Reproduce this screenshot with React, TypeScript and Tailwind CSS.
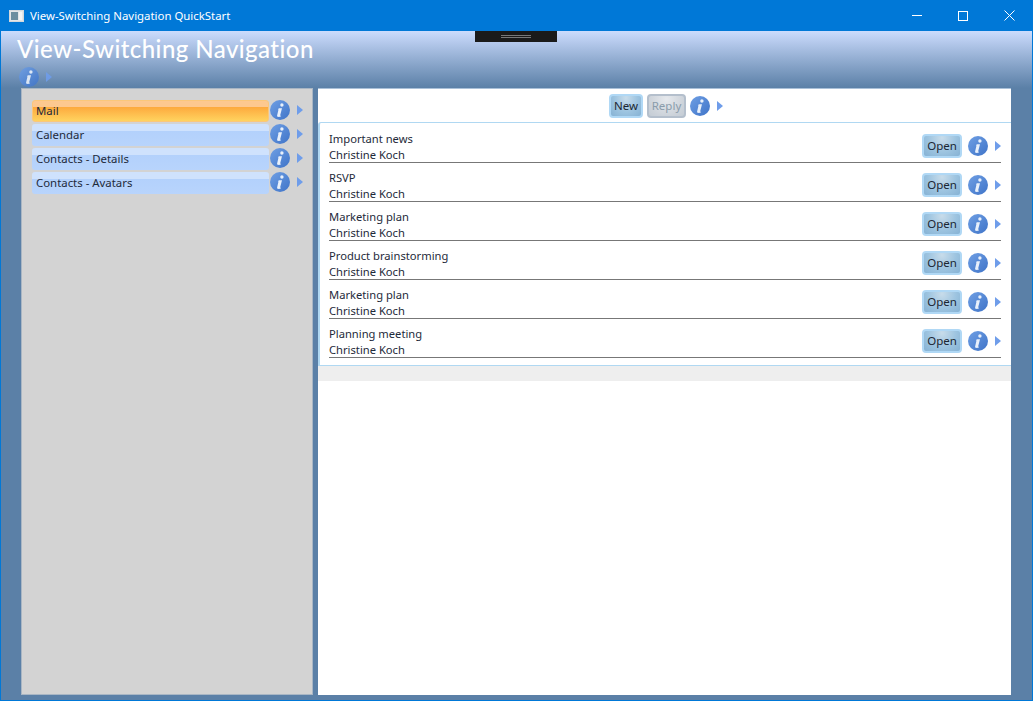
const navItems = ["Calendar", "Contacts - Details", "Contacts - Avatars"];

const messages = [
  "Important news",
  "RSVP",
  "Marketing plan",
  "Product brainstorming",
  "Marketing plan",
  "Planning meeting",
];

function InfoIcon() {
  return (
    <svg width="20" height="20" viewBox="0 0 20 20" className="shrink-0">
      <defs>
        <linearGradient id="infoFill" x1="0" y1="0" x2="1" y2="1">
          <stop offset="0" stopColor="#6f9fe4" />
          <stop offset="1" stopColor="#3f74c8" />
        </linearGradient>
      </defs>
      <circle cx="10" cy="10" r="10" fill="url(#infoFill)" />
      <circle cx="11.9" cy="5" r="1.7" fill="#e8f0fb" />
      <path d="M9 8.2h3l-1.8 7q-.1.6.8.5l-.2.9q-1.4.5-3 .2-.9-.3-.7-1.4L8.5 9.4 7.8 9.2z" fill="#e8f0fb" />
    </svg>
  );
}

function InfoWithArrow() {
  return (
    <div className="flex shrink-0 items-center">
      <InfoIcon />
      <svg width="6" height="10" viewBox="0 0 6 10" className="ml-[7px]">
        <path d="M0 0l6 5-6 5z" fill="#6f9dea" />
      </svg>
    </div>
  );
}

function GlassButton({ label, width, disabled }: { label: string; width: string; disabled?: boolean }) {
  const look = disabled
    ? "border-[#b4bfcc] bg-[radial-gradient(ellipse_at_50%_15%,#e6e9ed_0%,#cdd3da_70%,#c4ccd5_100%)] text-[#8a9cab]"
    : "border-[#b0d8f5] bg-[radial-gradient(ellipse_at_50%_10%,#c8dcea_0%,#9dc4e0_55%,#86b2d4_100%)] text-[#1c2733]";
  return (
    <button className={`flex h-[24px] shrink-0 items-center justify-center rounded-[4px] border-2 text-[11.5px] leading-none ${width} ${look}`}>
      {label}
    </button>
  );
}

export default function App() {
  return (
    <div className="flex h-[701px] w-[1033px] flex-col overflow-hidden border-x border-b border-[#0078d7] bg-[#5b80a7] font-['Noto_Sans',sans-serif] text-[11.4px] text-[#1e2a3a]">
      <div className="flex h-[31px] shrink-0 items-center bg-[#0078d7] text-white">
        <div className="ml-[8px] flex h-[12px] w-[15px] items-stretch gap-[1px] border border-[#d4d8dc] bg-[#e4e6e8] p-[1px]">
          <div className="w-[7px] bg-[#6c8ea0]" />
          <div className="flex-1 bg-[#f4f4f4]" />
        </div>
        <span className="ml-[6px] text-[11.4px]">View-Switching Navigation QuickStart</span>
        <div className="ml-auto flex h-full items-center">
          <div className="flex w-[46px] justify-center">
            <div className="h-px w-[10px] bg-white" />
          </div>
          <div className="flex w-[46px] justify-center">
            <div className="h-[10px] w-[10px] border border-white" />
          </div>
          <div className="flex w-[46px] justify-center">
            <svg width="11" height="11" viewBox="0 0 11 11">
              <path d="M.5.5l10 10M10.5.5l-10 10" stroke="#ffffff" strokeWidth="1" fill="none" />
            </svg>
          </div>
        </div>
      </div>

      <div className="relative h-[57px] shrink-0 bg-gradient-to-b from-[#ccdcfd] to-[#5b80a7] pl-[16px]">
        <div className="absolute left-[474px] top-0 flex h-[11px] w-[82px] flex-col items-center justify-center gap-[1px] bg-[#1a1a1a]">
          <div className="h-px w-[30px] bg-[#777777]" />
          <div className="h-px w-[30px] bg-[#777777]" />
        </div>
        <h1 className="h-[35px] font-['Lato',sans-serif] text-[24px] font-medium leading-[36px] tracking-[0.45px] text-white">
          View-Switching Navigation
        </h1>
        <div className="ml-[2px] mt-[1px] opacity-90">
          <InfoWithArrow />
        </div>
      </div>

      <div className="flex min-h-0 flex-1 pl-[20px] pr-[21px]">
        <aside className="w-[292px] shrink-0 border border-[#a9b6c4] bg-[#d3d3d3] pl-[10px] pt-[11px]">
          <div className="flex flex-col gap-[2px]">
            <div className="flex h-[22px] items-center gap-[1px]">
              <div className="h-[22px] w-[237px] rounded-[3px] border border-[#fbc77a] bg-[linear-gradient(#fdc88f_0%,#fdc88f_28%,#fda93d_30%,#ffd35f_100%)] pl-[3px] leading-[20px]">
                Mail
              </div>
              <div className="-mt-[2px]">
                <InfoWithArrow />
              </div>
            </div>
            {navItems.map((item) => (
              <div key={item} className="flex h-[22px] items-center gap-[1px]">
                <div className="h-[22px] w-[237px] rounded-[3px] bg-[linear-gradient(#cfe2fd_0%,#cfe2fd_30%,#b3d1fc_32%,#b8d4fc_100%)] pl-[4px] pt-[1px] leading-[20px]">
                  {item}
                </div>
                <div className="-mt-[2px]">
                  <InfoWithArrow />
                </div>
              </div>
            ))}
          </div>
        </aside>

        <main className="ml-[5px] flex w-[693px] shrink-0 flex-col border-t border-[#a9c0d8] bg-white">
          <div className="flex h-[33px] shrink-0 items-center justify-center gap-[4px] pl-[3px] pt-[1px]">
            <GlassButton label="New" width="w-[34px]" />
            <GlassButton label="Reply" width="w-[39px]" disabled />
            <InfoWithArrow />
          </div>
          <div className="rounded-tl-[3px] border-l-2 border-t border-[#b0d8f2] pl-[9px] pr-[10px] pt-[1px]">
            {messages.map((subject, i) => (
              <div key={i} className="flex h-[39px] items-end justify-between border-b border-[#777777] pb-[4px]">
                <div className="-mb-[5px] text-[11.2px] leading-[16px]">
                  <div>{subject}</div>
                  <div>Christine Koch</div>
                </div>
                <div className="flex items-center gap-[6px]">
                  <GlassButton label="Open" width="w-[40px]" />
                  <InfoWithArrow />
                </div>
              </div>
            ))}
            <div className="h-[7px]" />
          </div>
          <div className="h-[16px] shrink-0 border-t border-[#b0d8f2] bg-[#eeeeee]" />
        </main>
      </div>
      <div className="h-[5px] shrink-0" />
    </div>
  );
}
